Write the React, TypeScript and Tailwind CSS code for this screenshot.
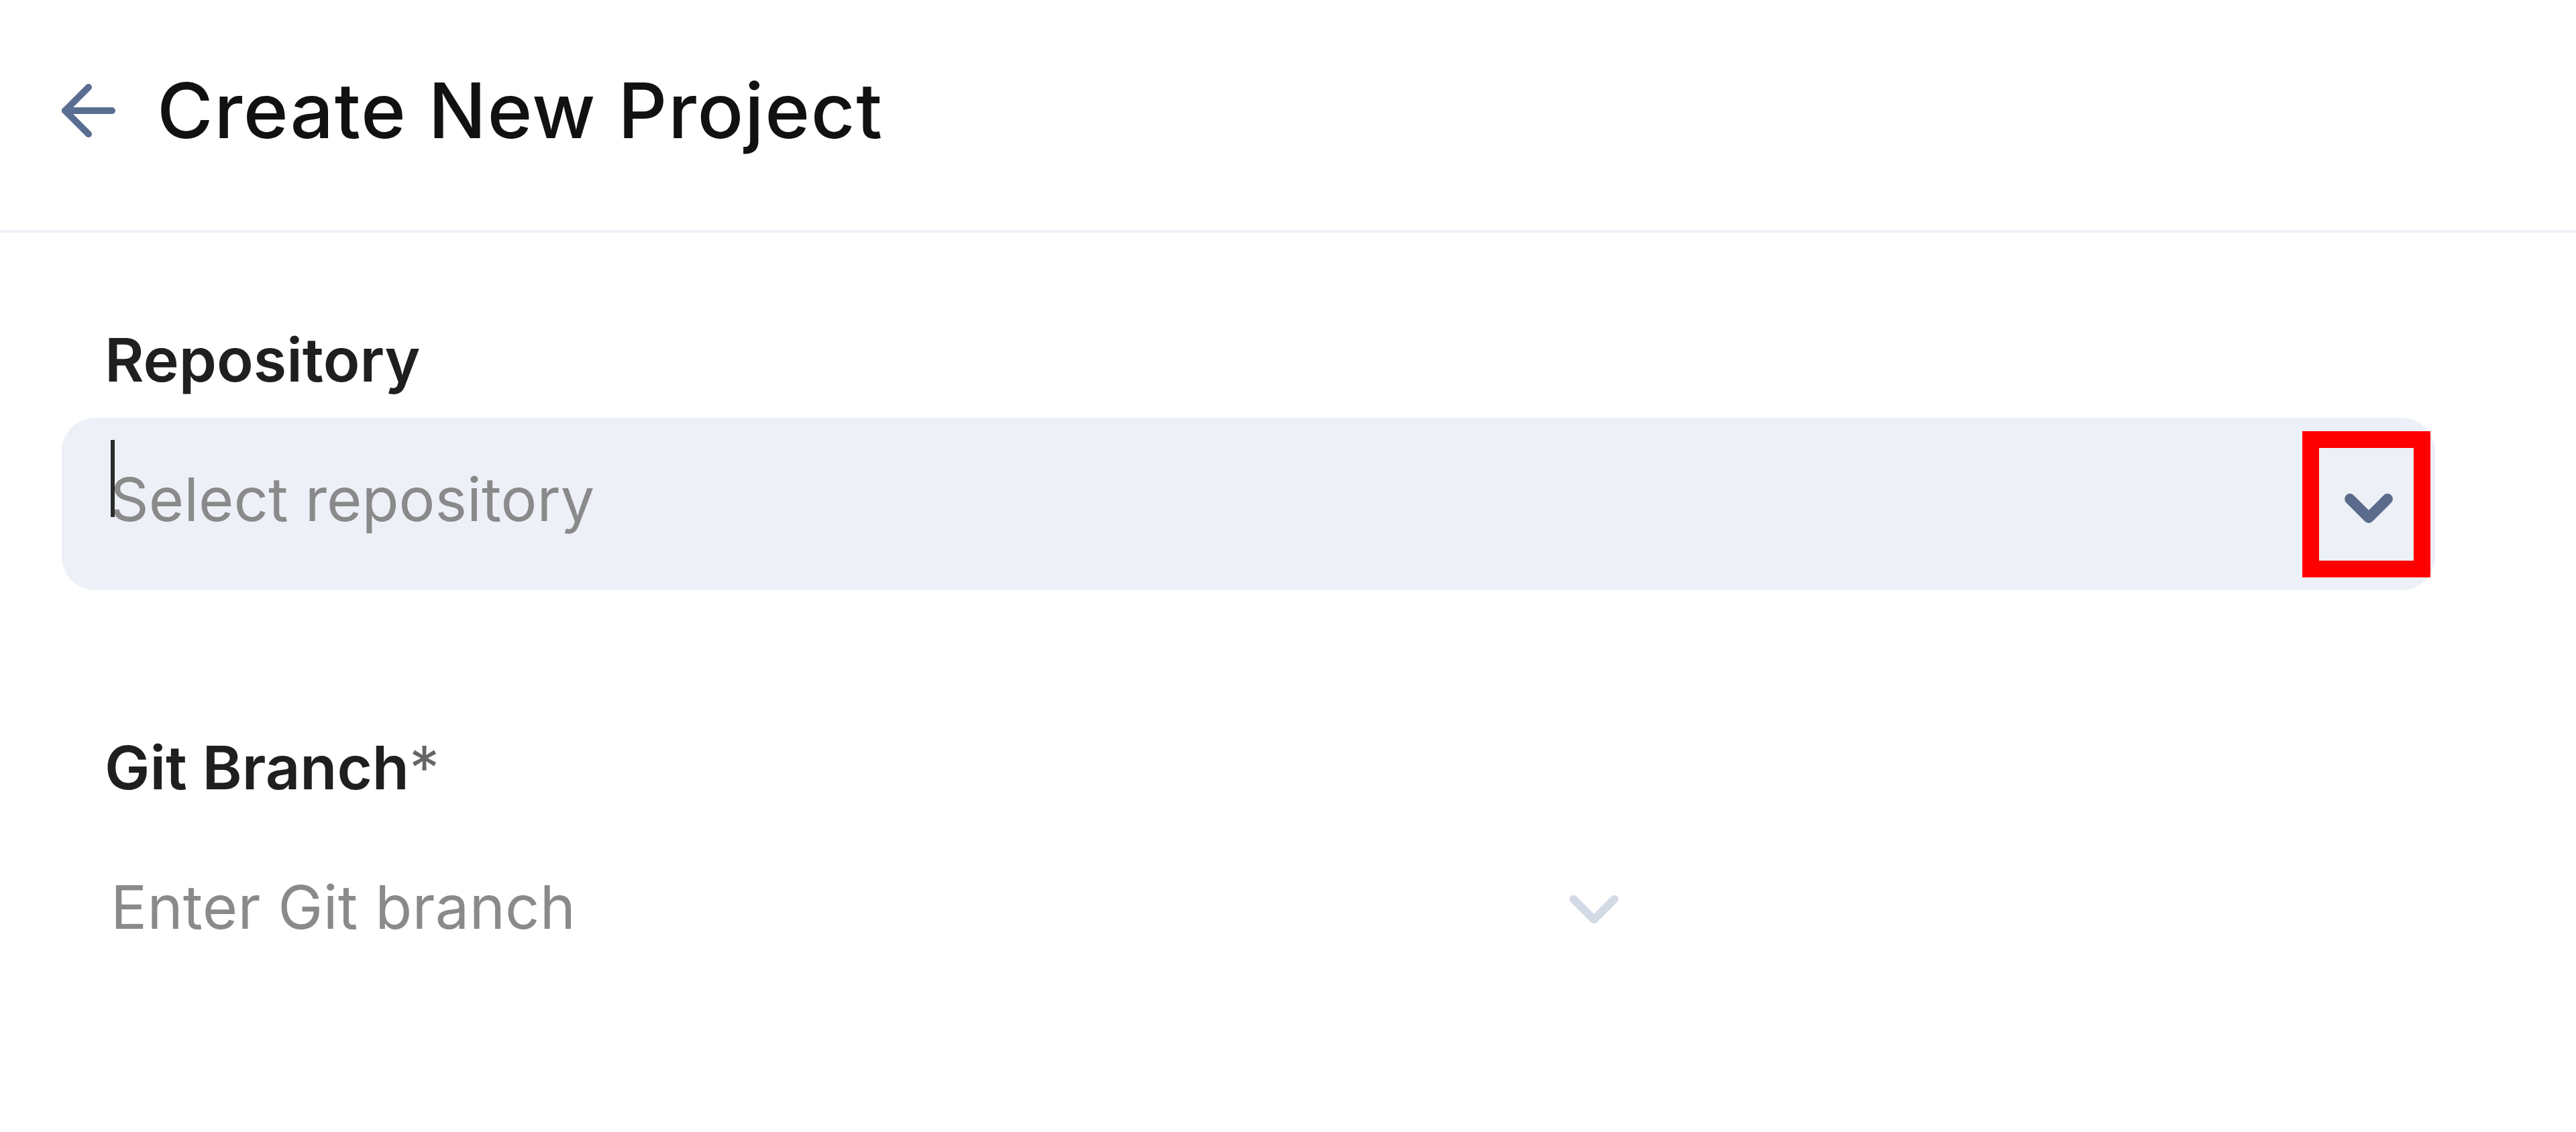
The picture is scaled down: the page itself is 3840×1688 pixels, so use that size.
import React from "react";

function ArrowLeft({ className }: { className?: string }) {
  return (
    <svg
      viewBox="0 0 24 24"
      fill="none"
      stroke="currentColor"
      strokeWidth={2}
      strokeLinecap="round"
      strokeLinejoin="round"
      className={className}
    >
      <path d="m12 19-7-7 7-7" />
      <path d="M19 12H5" />
    </svg>
  );
}

function ChevronDown({ className, strokeWidth }: { className?: string; strokeWidth: number }) {
  return (
    <svg
      viewBox="0 0 24 24"
      fill="none"
      stroke="currentColor"
      strokeWidth={strokeWidth}
      strokeLinecap="round"
      strokeLinejoin="round"
      className={className}
    >
      <path d="m6 9 6 6 6-6" />
    </svg>
  );
}

export default function App() {
  return (
    <div
      className="min-h-[1688px] w-[3840px] bg-white"
      style={{ fontFamily: "Inter, 'Noto Sans', sans-serif" }}
    >
      {/* Page header */}
      <header className="flex items-center gap-[42px] pl-[72px] pt-[105px] pb-[118px] border-b-[4px] border-[#eef1f7]">
        <button className="text-[#5a6e92]" aria-label="Back">
          <ArrowLeft className="w-[120px] h-[120px]" />
        </button>
        <h1 className="text-[114px] leading-none font-medium text-[#111111] tracking-[1.6px]">
          Create New Project
        </h1>
      </header>

      {/* Form */}
      <main className="pl-[92px] pt-[145px]">
        <label className="block pl-[64px] text-[90px] leading-none font-semibold text-[#1f1f1f]">
          Repository
        </label>
        <div className="mt-[41px] w-[3538px] h-[257px] rounded-[50px] bg-[#edf0f7] flex items-center pl-[72px] pr-[7px]">
          <div className="relative flex-1 flex items-center pb-[14px]">
            <span className="text-[90px] leading-none text-[#8a8a8a]">Select repository</span>
            <span className="absolute left-[1px] top-[-44px] w-[6px] h-[115px] bg-[#2b2b2b]" />
          </div>
          <button
            className="w-[191px] h-[218px] border-[25px] border-[#ff0000] flex items-center justify-center pl-[7px] pt-[13px] text-[#5b6b8c]"
            aria-label="Open repositories"
          >
            <ChevronDown className="w-[112px] h-[112px] shrink-0" strokeWidth={3.4} />
          </button>
        </div>

        <label className="block mt-[220px] pl-[64px] text-[90px] leading-none font-semibold text-[#1f1f1f]">
          Git Branch<span className="font-normal text-[#666666]">*</span>
        </label>
        <div className="mt-[34px] w-[2345px] h-[257px] flex items-center pl-[73px]">
          <span className="flex-1 text-[90px] tracking-[0.3px] leading-none text-[#8a8a8a]">Enter Git branch</span>
          <ChevronDown className="w-[122px] h-[122px] text-[#d4dae5] mt-[6px]" strokeWidth={2.4} />
        </div>
      </main>
    </div>
  );
}
